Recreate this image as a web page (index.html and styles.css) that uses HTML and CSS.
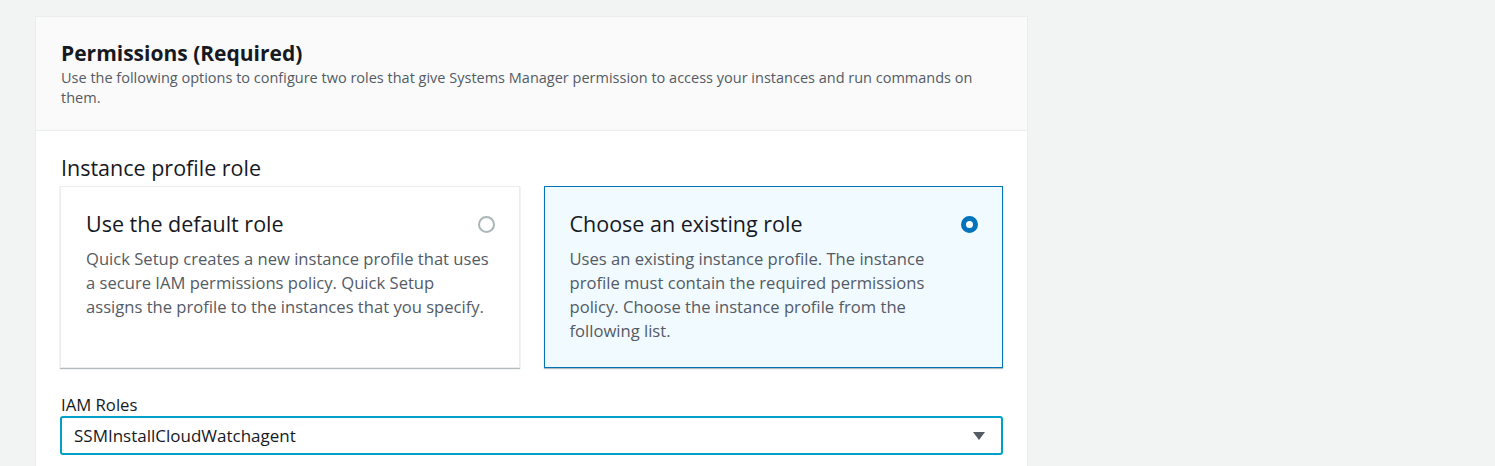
FILE: index.html
```html
<!DOCTYPE html>
<html lang="en">
<head>
<meta charset="utf-8">
<title>Permissions</title>
<link rel="stylesheet" href="styles.css">
</head>
<body>
<div class="panel">
  <div class="panel-header">
    <h2 class="panel-title">Permissions (Required)</h2>
    <p class="panel-desc">Use the following options to configure two roles that give Systems Manager permission to access your instances and run commands on them.</p>
  </div>
  <div class="panel-body">
    <h3 class="section-title">Instance profile role</h3>
    <div class="tiles">
      <div class="tile">
        <div class="tile-head">
          <span class="tile-title">Use the default role</span>
          <span class="radio"></span>
        </div>
        <p class="tile-desc">Quick Setup creates a new instance profile that uses a secure IAM permissions policy. Quick Setup assigns the profile to the instances that you specify.</p>
      </div>
      <div class="tile tile-selected">
        <div class="tile-head">
          <span class="tile-title">Choose an existing role</span>
          <span class="radio radio-checked"></span>
        </div>
        <p class="tile-desc tile-desc-narrow">Uses an existing instance profile. The instance profile must contain the required permissions policy. Choose the instance profile from the following list.</p>
      </div>
    </div>
    <div class="field">
      <label class="field-label">IAM Roles</label>
      <div class="select">
        <span class="select-value">SSMInstallCloudWatchagent</span>
        <span class="caret"></span>
      </div>
    </div>
  </div>
</div>
</body>
</html>
```

FILE: styles.css
```css
* { box-sizing: border-box; }
html, body { margin: 0; }
body {
  background: #f2f3f3;
  font-family: "Open Sans", "Noto Sans", sans-serif;
  color: #16191f;
  padding: 16px 0 0 35px;
}
.panel {
  width: 993px;
  background: #ffffff;
  border: 1px solid #eaeded;
  border-bottom: none;
  min-height: 460px;
}
.panel-header {
  background: #fafafa;
  border-bottom: 1px solid #eaeded;
  padding: 21px 30px 0 25px;
  height: 114px;
}
.panel-title {
  margin: 0;
  font-size: 21px;
  font-weight: 700;
  line-height: 30px;
  color: #16191f;
}
.panel-desc {
  margin: 0;
  font-size: 14.5px;
  line-height: 20px;
  color: #545b64;
}
.panel-body {
  padding: 24px 24px 0;
}
.section-title {
  margin: 0 0 5px 1px;
  font-size: 21.5px;
  font-weight: 400;
  line-height: 26px;
  color: #16191f;
}
.tiles {
  display: grid;
  grid-template-columns: 1fr 1fr;
  gap: 24px;
}
.tile {
  height: 182px;
  border: 1px solid #eaeded;
  box-shadow: 0 1px 1px 0 rgba(0, 28, 36, 0.3);
  background: #ffffff;
  padding: 22px 24px 20px 25px;
}
.tile-selected {
  background: #f1faff;
  border-color: #0073bb;
}
.tile-head {
  display: flex;
  justify-content: space-between;
  align-items: center;
  margin-bottom: 8px;
}
.tile-title {
  font-size: 21.5px;
  line-height: 30px;
  color: #16191f;
}
.radio {
  width: 17px;
  height: 17px;
  border-radius: 50%;
  border: 2px solid #aab7b8;
  background: #ffffff;
}
.radio-checked {
  border: 5px solid #0073bb;
}
.tile-desc {
  margin: 0;
  font-size: 16.6px;
  line-height: 24px;
  color: #545b64;
}
.tile-desc-narrow {
  max-width: 362px;
}
.field {
  margin-top: 26px;
}
.field-label {
  display: block;
  font-size: 16.7px;
  line-height: 22px;
  color: #16191f;
  margin-left: 1px;
}
.select {
  display: flex;
  align-items: center;
  justify-content: space-between;
  height: 39px;
  border: 2px solid #00a1c9;
  border-radius: 3px;
  background: #ffffff;
  padding: 0 16px 0 12px;
}
.select-value {
  font-size: 17px;
  color: #16191f;
}
.caret {
  width: 0;
  height: 0;
  border-left: 6px solid transparent;
  border-right: 6px solid transparent;
  border-top: 8px solid #545b64;
}
```
